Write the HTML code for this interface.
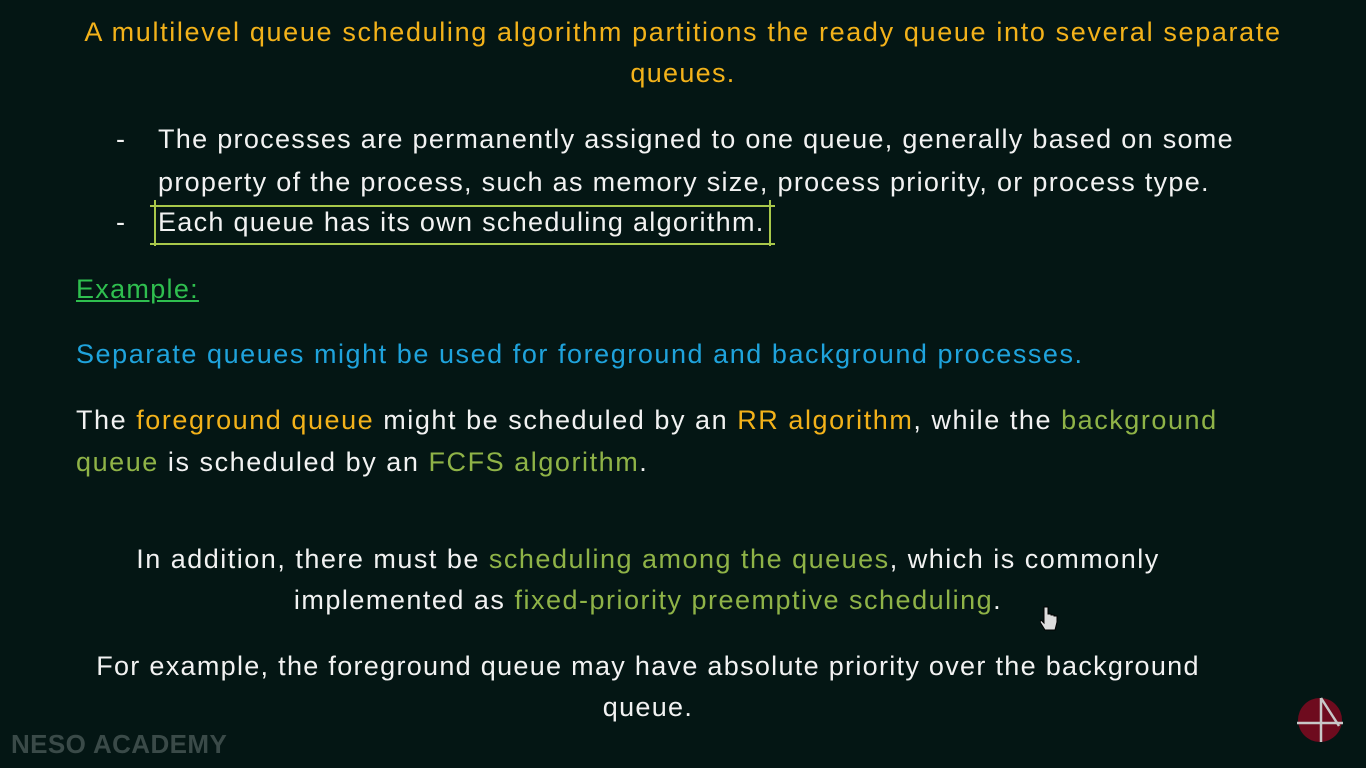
<!DOCTYPE html>
<html><head><meta charset="utf-8"><style>
html,body{margin:0;padding:0}
body{width:1366px;height:768px;background:#041614;position:relative;overflow:hidden;font-family:"Liberation Sans",sans-serif;font-size:27px;letter-spacing:1.3px;color:#f2f2f2}
.l{position:absolute;white-space:nowrap;line-height:30px}
.c{left:0;width:1366px;text-align:center}
.o{color:#f3b21a}.b{color:#1fa3dc}.g{color:#8fb347}
</style></head><body>
<div class="l c o" style="top:17px;letter-spacing:1.65px">A multilevel queue scheduling algorithm partitions the ready queue into several separate</div>
<div class="l c o" style="top:58px">queues.</div>
<div class="l" style="left:116px;top:124px">-</div>
<div class="l" style="left:158px;top:124px">The processes are permanently assigned to one queue, generally based on some</div>
<div class="l" style="left:158px;top:167px">property of the process, such as memory size, process priority, or process type.</div>
<div class="l" style="left:116px;top:207px">-</div>
<div class="l" style="left:158px;top:207px">Each queue has its own scheduling algorithm.</div>
<div style="position:absolute;left:150px;top:205px;width:625px;height:36px;border-top:2px solid #a9c84a;border-bottom:2px solid #a9c84a"></div>
<div style="position:absolute;left:154px;top:200px;width:2px;height:46px;background:#a9c84a"></div>
<div style="position:absolute;left:769px;top:200px;width:2px;height:46px;background:#a9c84a"></div>
<div class="l" style="left:76px;top:274px;color:#2fbf4f;text-decoration:underline">Example:</div>
<div class="l b" style="left:76px;top:339px;letter-spacing:1.55px">Separate queues might be used for foreground and background processes.</div>
<div class="l" style="left:76px;top:405px;letter-spacing:1.55px">The <span class="o">foreground queue</span> might be scheduled by an <span class="o">RR algorithm</span>, while the <span class="g">background</span></div>
<div class="l" style="left:76px;top:447px;letter-spacing:1.55px"><span class="g">queue</span> is scheduled by an <span class="g">FCFS algorithm</span>.</div>
<div class="l" style="left:0;width:1296px;text-align:center;top:544px;letter-spacing:1.5px">In addition, there must be <span class="g">scheduling among the queues</span>, which is commonly</div>
<div class="l" style="left:0;width:1296px;text-align:center;top:585px;letter-spacing:1.5px">implemented as <span class="g">fixed-priority preemptive scheduling</span>.</div>
<div class="l" style="left:0;width:1296px;text-align:center;top:651px">For example, the foreground queue may have absolute priority over the background</div>
<div class="l" style="left:0;width:1296px;text-align:center;top:692px">queue.</div>
<div class="l" style="left:11px;top:729px;font-weight:bold;color:#3a4a48;font-size:26px;letter-spacing:0.4px">NESO ACADEMY</div>
<svg style="position:absolute;left:1297px;top:697px" width="46" height="46" viewBox="0 0 46 46">
<circle cx="23" cy="23" r="22" fill="#6e0b1e"/>
<line x1="0" y1="26" x2="46" y2="26" stroke="#c8c8c8" stroke-width="2.5"/>
<line x1="24" y1="1" x2="24" y2="45" stroke="#c8c8c8" stroke-width="2.5"/>
<line x1="24" y1="1" x2="42" y2="29" stroke="#c8c8c8" stroke-width="2.5"/>
</svg>
<svg style="position:absolute;left:1040px;top:605px" width="18" height="30" viewBox="0 0 18 30">
<path d="M4 2v16l-3-3-1 2 5 8h10l2-8v-6h-3v-1h-3v-1h-3V2z" fill="#ddd" stroke="#000" stroke-width="1"/>
</svg>
</body></html>
